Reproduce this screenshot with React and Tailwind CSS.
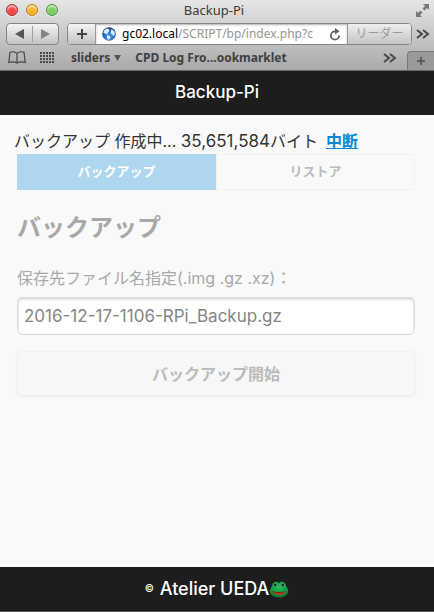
import React from "react";

const PAGE_FONT = "font-['Inter','Noto_Sans_CJK_JP',sans-serif]";
const CHROME_FONT = "font-['Noto_Sans','Noto_Sans_CJK_JP',sans-serif]";

function Light({ label, className }) {
  return (
    <button
      type="button"
      aria-label={label}
      className={`h-3 w-3 rounded-full border shadow-[inset_0_2px_2px_rgba(255,255,255,0.65),0_1px_0_rgba(255,255,255,0.5)] ${className}`}
    />
  );
}

function FullscreenIcon() {
  return (
    <svg width="15" height="15" viewBox="0 0 15 15" fill="#777" aria-hidden="true">
      <path d="M8 1h6v6l-2-2-2.5 2.500L7.500 5.500 10 3z" />
      <path d="M1 8v6h6l-2-2 2.500-2.500-2-2L3 10z" />
    </svg>
  );
}

function ChevronsIcon() {
  return (
    <svg width="14" height="10" viewBox="0 0 14 10" fill="none" stroke="#484848" strokeWidth="2" aria-hidden="true">
      <path d="M1 1l5 4-5 4M7 1l5 4-5 4" />
    </svg>
  );
}

function PlusIcon({ color, size }) {
  return (
    <svg width={size} height={size} viewBox="0 0 10 10" stroke={color} strokeWidth="2" aria-hidden="true">
      <path d="M5 0v10M0 5h10" />
    </svg>
  );
}

function GlobeIcon() {
  return (
    <svg width="14" height="14" viewBox="0 0 14 14" className="shrink-0" aria-hidden="true">
      <defs>
        <radialGradient id="globe" cx="0.5" cy="0.7" r="0.65">
          <stop offset="0" stopColor="#4da3f0" />
          <stop offset="0.65" stopColor="#1d62bd" />
          <stop offset="1" stopColor="#153c80" />
        </radialGradient>
      </defs>
      <circle cx="7" cy="7" r="6.800" fill="url(#globe)" />
      <path d="M2 3.500L4.500 1.500 7 2l.5 2L6 5.500 5 7.500 3.500 6.500 1.500 6zM5 8l3 1 .5 2L6.500 13 5 11zM9.500 2l2.500 2 1 3-1.500 2-1.500-1.500L8.500 6z" fill="#d3ecfb" />
    </svg>
  );
}

function ReloadIcon() {
  return (
    <svg width="12" height="13" viewBox="0 0 12 13" className="shrink-0" aria-hidden="true">
      <path d="M10.200 7.500A4.200 4.200 0 1 1 6 3.300h1" fill="none" stroke="#606060" strokeWidth="1.800" />
      <path d="M6 0l4.500 3.200L6 6.500z" fill="#606060" />
    </svg>
  );
}

function BookIcon() {
  return (
    <svg width="18" height="13" viewBox="0 0 18 13" fill="none" stroke="#484848" strokeWidth="1.200" aria-hidden="true">
      <path d="M9 2.500C7.500.5 4 .5 2 1.200L.8 11.500C4 10.500 7 10.500 9 12c2-1.500 5-1.500 8.200-.5L16 1.200C14 .5 10.500.5 9 2.500zM9 2.500V12" />
    </svg>
  );
}

function GridIcon() {
  const cells = [];
  for (let y = 0; y < 4; y++) for (let x = 0; x < 5; x++) cells.push([x, y]);
  return (
    <svg width="15" height="12" viewBox="0 0 15 12" fill="#484848" shapeRendering="crispEdges" aria-hidden="true">
      {cells.map(([x, y]) => (
        <rect key={`${x}-${y}`} x={x * 3} y={y * 3} width="2" height="2" />
      ))}
    </svg>
  );
}

function FrogIcon() {
  return (
    <svg width="20" height="17" viewBox="0 0 20 17" role="img" aria-label="frog">
      <defs>
        <radialGradient id="frog" cx="0.5" cy="0.35" r="0.65">
          <stop offset="0" stopColor="#22c15a" />
          <stop offset="0.7" stopColor="#0c9c48" />
          <stop offset="1" stopColor="#056c31" />
        </radialGradient>
      </defs>
      <path d="M10 2.500C9 0 4 0 3.500 3.500 3 6 .5 7.500.7 10.500 1 14 5 16.500 10 16.500s9-2.500 9.300-6C19.500 7.500 17 6 16.500 3.500 16 0 11 0 10 2.500z" fill="url(#frog)" />
      <circle cx="6.200" cy="4" r="2" fill="#7fae88" />
      <circle cx="13.800" cy="4" r="2" fill="#7fae88" />
      <circle cx="6.200" cy="4" r="1.400" fill="#12281a" />
      <circle cx="13.800" cy="4" r="1.400" fill="#12281a" />
      <path d="M3.500 10.800c4 1.200 9 1.200 13 0-1 2.200-3.500 3.200-6.500 3.200s-5.500-1-6.500-3.200z" fill="#c5301f" />
      <path d="M3.500 10.600c4 1.200 9 1.200 13 0" fill="none" stroke="#7a1a14" strokeWidth="0.800" />
    </svg>
  );
}

function BrowserChrome() {
  return (
    <div className={`flex flex-col border-b border-[#666] bg-linear-to-b from-[#e6e6e6] via-[#c8c8c8] to-[#a9a9a9] ${CHROME_FONT}`}>
      <div className="grid h-5 grid-cols-[1fr_auto_1fr] items-center pr-1 pl-1.5">
        <div className="flex gap-2">
          <Light label="Close" className="border-[#a33331] bg-[#f04846]" />
          <Light label="Minimize" className="border-[#b87a20] bg-[#f7b32c]" />
          <Light label="Zoom" className="border-[#4f9140] bg-[#79ce62]" />
        </div>
        <div className="pr-2 text-[13px] leading-5 text-[#3a3a3a]">Backup-Pi</div>
        <button type="button" aria-label="Full screen" className="justify-self-end">
          <FullscreenIcon />
        </button>
      </div>

      <div className="flex items-center pt-[3px] pr-1 pl-1.5">
        <div className="flex h-[22px] w-[53px] shrink-0 items-center rounded border border-[#858585] bg-linear-to-b from-[#f5f5f5] to-[#c3c3c3]">
          <button type="button" aria-label="Back" className="flex h-full flex-1 items-center justify-center">
            <svg width="9" height="10" viewBox="0 0 9 10" fill="#555" aria-hidden="true"><path d="M9 0v10L0 5z" /></svg>
          </button>
          <div className="h-4 w-px bg-[#a0a0a0]" />
          <button type="button" aria-label="Forward" className="flex h-full flex-1 items-center justify-center">
            <svg width="9" height="10" viewBox="0 0 9 10" fill="#858585" aria-hidden="true"><path d="M0 0v10l9-5z" /></svg>
          </button>
        </div>
        <div className="ml-2 flex h-[22px] min-w-0 flex-1 overflow-hidden rounded border border-[#858585] bg-white">
          <button type="button" aria-label="Add bookmark" className="flex w-7 shrink-0 items-center justify-center border-r border-[#999] bg-linear-to-b from-[#f5f5f5] to-[#c3c3c3]">
            <PlusIcon color="#444" size={10} />
          </button>
          <div className="flex min-w-0 flex-1 items-center pr-1.5 pl-1.5 shadow-[inset_0_1px_2px_rgba(0,0,0,0.3)]">
            <GlobeIcon />
            <div className="ml-1.5 min-w-0 flex-1 text-xs leading-5 whitespace-nowrap text-[#969696]">
              <span className="text-black">gc02.local</span>/SCRIPT/bp/index.php?c
            </div>
            <button type="button" aria-label="Reload" className="ml-2">
              <ReloadIcon />
            </button>
          </div>
          <button type="button" className="w-16 shrink-0 border-l border-[#999] bg-linear-to-b from-[#eee] to-[#c5c5c5] text-xs leading-5 text-[#999]">
            リーダー
          </button>
        </div>
        <button type="button" aria-label="More tools" className="ml-1">
          <ChevronsIcon />
        </button>
      </div>

      <div className="flex h-[25px] items-center pl-2 text-xs font-bold text-[#404040]">
        <button type="button" aria-label="Bookmarks"><BookIcon /></button>
        <button type="button" aria-label="Top sites" className="ml-3.5"><GridIcon /></button>
        <button type="button" className="ml-4 flex items-center gap-1">
          sliders
          <svg width="7" height="6" viewBox="0 0 7 6" fill="#555" aria-hidden="true"><path d="M0 0h7L3.500 6z" /></svg>
        </button>
        <button type="button" className="ml-3.5 whitespace-nowrap">CPD Log Fro...ookmarklet</button>
        <button type="button" aria-label="More bookmarks" className="mr-2.5 ml-auto"><ChevronsIcon /></button>
        <button type="button" aria-label="New tab" className="mt-1.5 flex h-[19px] w-[27px] items-center justify-center rounded-tl border-t border-l border-[#777] bg-[#999]">
          <PlusIcon color="#505050" size={8} />
        </button>
      </div>
    </div>
  );
}

export default function App() {
  return (
    <div className={`flex min-h-screen flex-col bg-[#f9f9f9] text-base text-[#333] ${PAGE_FONT}`}>
      <BrowserChrome />

      <header className="flex h-11 items-center justify-center bg-[#1d1d1d]">
        <h1 className="text-[17px] font-medium text-white">Backup-Pi</h1>
      </header>

      <main className="flex-1">
        <p className="pt-3.5 pb-px pl-3.5 leading-6">
          バックアップ 作成中... <span className="text-[17px]">35,651,584</span>バイト
          <a href="#stop" className="ml-2 font-bold text-[#0788d1] underline">中断</a>
        </p>

        <div className="pr-[19px] pl-[17px]">
          <nav className="grid h-9 grid-cols-2 text-[13px] font-bold">
            <button type="button" className="bg-[#aed6ef] text-white">バックアップ</button>
            <button type="button" className="border border-[#f0f0f0] text-[#bbb]">リストア</button>
          </nav>

          <form onSubmit={(e) => e.preventDefault()}>
            <h2 className="mt-5 text-2xl leading-9 font-bold text-[#a8a8a8]">バックアップ</h2>
            <label htmlFor="file" className="mt-5 block leading-6 text-[#a8a8a8]">
              保存先ファイル名指定(.img .gz .xz)：
            </label>
            <input
              id="file"
              type="text"
              defaultValue="2016-12-17-1106-RPi_Backup.gz"
              className="mt-[7px] block h-[38px] w-full rounded-[5px] border border-[#dcdcdc] bg-white px-1.5 text-[17px] text-[#858585] shadow-[inset_0_1px_3px_rgba(0,0,0,0.2)]"
            />
            <button
              type="submit"
              className="mt-4 h-[45px] w-full rounded-[5px] border border-[#f0f0f0] bg-[#f7f7f7] font-bold text-[#bbb] shadow-[0_1px_3px_rgba(0,0,0,0.05)]"
            >
              バックアップ開始
            </button>
          </form>
        </div>
      </main>

      <footer className="flex h-[45px] items-center justify-center border-b border-[#555] bg-[#1d1d1d] text-lg font-medium text-white">
        <span className="mr-1.5 text-[10px]">©</span>
        Atelier UEDA
        <FrogIcon />
      </footer>
    </div>
  );
}
